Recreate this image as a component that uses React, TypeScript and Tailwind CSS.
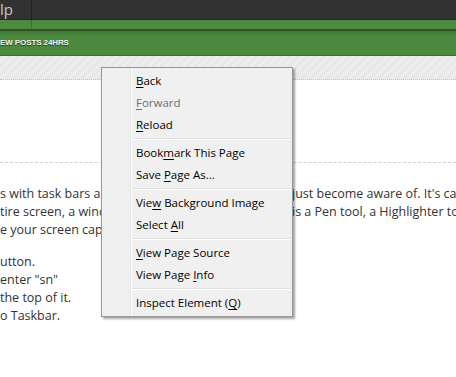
import React from "react";

const U = ({ children }: { children: React.ReactNode }) => (
  <span className="underline underline-offset-[2px] decoration-[1px]">{children}</span>
);

function Item({ children, disabled }: { children: React.ReactNode; disabled?: boolean }) {
  return (
    <div
      className={
        "h-[22px] flex items-center pl-[34px] whitespace-pre " +
        (disabled ? "text-[#6d6d6d]" : "text-black")
      }
    >
      <span>{children}</span>
    </div>
  );
}

function Sep() {
  return (
    <div className="h-[6px] flex flex-col justify-center pl-[30px] pr-[2px]">
      <div className="h-[1px] bg-[#e0e0e0]" />
      <div className="h-[1px] bg-white" />
    </div>
  );
}

function Line({ left, right }: { left: string; right?: string }) {
  return (
    <div className="flex whitespace-nowrap h-[18px] items-center">
      <span className="w-[101px] shrink-0 overflow-hidden">{left}</span>
      {right && <span className="ml-[191px]">{right}</span>}
    </div>
  );
}

export default function App() {
  return (
    <div
      className="relative w-[456px] h-[377px] overflow-hidden bg-white"
      style={{ fontFamily: '"Open Sans", "Noto Sans", sans-serif' }}
    >
      {/* top dark bar */}
      <div className="h-[20px] bg-[#323232] flex border-b border-[#262626]">
        <div className="w-[32px] border-r border-[#222] flex items-center text-[#c8c8c8] text-[15px] leading-none pb-[1px]">
          lp
        </div>
      </div>
      {/* thin green strip */}
      <div className="h-[9px] bg-[#4d8a3f] flex">
        <div className="w-[32px] border-r border-[#3b6e30]" />
      </div>
      <div className="h-[2px] bg-[#2c5426]" />
      {/* green band */}
      <div className="h-[24px] bg-[linear-gradient(#3f7634,#4c893e_5px,#4d8a3e)] flex items-center">
        <span
          className="text-[8px] font-semibold tracking-[-0.1px] text-[#f2f6ee] [text-shadow:0_1px_1px_rgba(0,0,0,0.6)]"
          style={{ fontFamily: '"Liberation Sans", Arial, sans-serif' }}
        >
          EW POSTS 24HRS
        </span>
      </div>
      <div className="h-[1px] bg-[#3d6f32]" />
      {/* light stripe band */}
      <div className="h-[24px] bg-[repeating-linear-gradient(135deg,#e8e8e8_0px,#e8e8e8_3px,#ededed_3px,#ededed_6px)] border-b border-dotted border-[#c4c4c4]" />
      {/* content */}
      <div className="pt-[82px] text-[12.5px] text-[#333]">
        <div className="border-t border-dashed border-[#d0d0d0]" />
        <div className="pt-[22px]">
          <Line left="s with task bars and start menus" right="just become aware of. It's called the Snipping Tool." />
          <Line left="tire screen, a window, a rectangle" right="is a Pen tool, a Highlighter tool and an Eraser." />
          <Line left="e your screen capture as a file" />
        </div>
        <div className="pt-[14px]">
          <Line left="utton." />
          <Line left="enter &quot;sn&quot;" />
          <Line left=" the top of it." />
          <Line left="o Taskbar." />
        </div>
      </div>

      {/* context menu */}
      <div className="absolute left-[101px] top-[67px] w-[192px] h-[250px] bg-[#f0f0f0] border border-[#979797] shadow-[2px_2px_2px_rgba(0,0,0,0.35)] text-[11.5px] pt-[2px]">
        <div className="absolute left-[28px] top-[1px] bottom-[1px] w-[1px] bg-[#e2e3e3]" />
        <div className="absolute left-[29px] top-[1px] bottom-[1px] w-[1px] bg-white" />
        <div className="relative">
          <Item><U>B</U>ack</Item>
          <Item disabled><U>F</U>orward</Item>
          <Item><U>R</U>eload</Item>
          <Sep />
          <Item>Book<U>m</U>ark This Page</Item>
          <Item>Save <U>P</U>age As...</Item>
          <Sep />
          <Item>Vie<U>w</U> Background Image</Item>
          <Item>Select <U>A</U>ll</Item>
          <Sep />
          <Item><U>V</U>iew Page Source</Item>
          <Item>View Page <U>I</U>nfo</Item>
          <Sep />
          <Item>Inspect Element (<U>Q</U>)</Item>
        </div>
      </div>
    </div>
  );
}
